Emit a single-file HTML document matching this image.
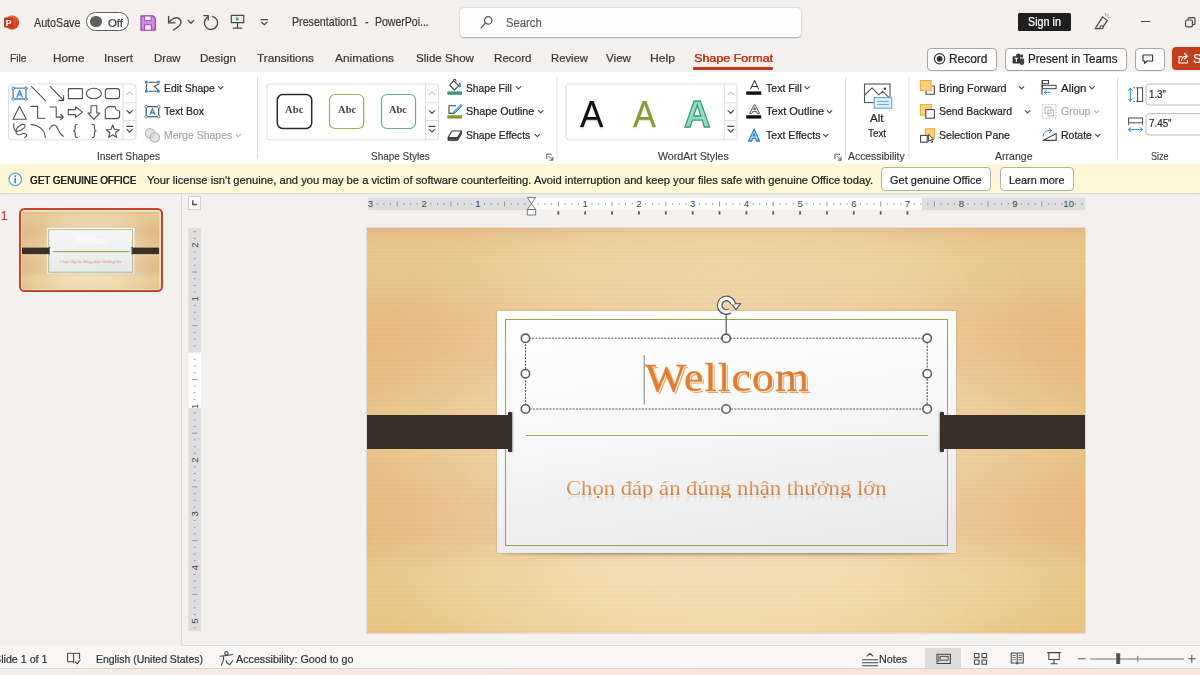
<!DOCTYPE html>
<html><head><meta charset="utf-8"><title>PowerPoint</title>
<style>
html,body{margin:0;padding:0;}
body{width:1200px;height:675px;position:relative;overflow:hidden;background:#f3f0ed;font-family:"Liberation Sans",sans-serif;}
.t{position:absolute;white-space:nowrap;line-height:1;transform-origin:0 50%;}
.l{-webkit-text-stroke:0.22px currentColor;}
.a{position:absolute;}
svg{position:absolute;overflow:visible;}
.thumb .gb{border-width:4.5px !important;border-color:#a4b063 !important;}
.thumb .gl{height:6px !important;top:204.5px !important;background:#9aa84f !important;}
.thumb .ttl{color:#fffaf4 !important;-webkit-text-stroke:2px #fffaf4 !important;text-shadow:0 0 6px #f3e3d3 !important;}
.thumb .sub{background:none !important;-webkit-text-fill-color:#e6b896 !important;color:#e6b896 !important;-webkit-text-stroke:1px #e6b896 !important;}
.thumb .sub2,.thumb .grain{display:none;}
.thumb .sl{filter:saturate(0.88);}
.thumb .card{background:linear-gradient(175deg,#f6f6f7 0%,#f0f1f2 45%,#e4e5e7 100%) !important;}
</style></head><body>
<!-- ribbon -->
<div class="a" style="left:0;top:72px;width:1200px;height:92px;background:#fff;"></div>
<!-- yellow bar -->
<div class="a" style="left:0;top:164px;width:1200px;height:29.2px;background:#fef7d7;box-shadow:0 0.8px 1.6px rgba(60,50,30,0.28);"></div>
<!-- status bar -->
<div class="a" style="left:0;top:646px;width:1200px;height:22px;background:#f8f7f6;"></div>
<div class="a" style="left:0;top:668px;width:1200px;height:7px;background:linear-gradient(to right,#f4ede8 0%,#f7e8e0 25%,#f8e4db 60%,#f8e5dc 100%);border-top:1px solid #d9d5d0;box-sizing:border-box;"></div>
<!-- ===== title bar ===== -->
<svg style="left:3px;top:14px" width="17" height="17" viewBox="0 0 17 17">
  <defs><linearGradient id="pg" x1="0" y1="0" x2="1" y2="1"><stop offset="0" stop-color="#f08a5e"/><stop offset="0.55" stop-color="#dc4f2c"/><stop offset="1" stop-color="#b8361a"/></linearGradient></defs>
  <circle cx="9" cy="8.5" r="7.2" fill="url(#pg)"/>
  <rect x="1" y="3.6" width="9.4" height="10" rx="1.2" fill="#c23a1c"/>
  <text x="5.7" y="12" font-family="'Liberation Sans',sans-serif" font-weight="bold" font-size="8.6" fill="#fff" text-anchor="middle">P</text>
</svg>
<!-- autosave toggle -->
<div class="a" style="left:86px;top:12.3px;width:40.5px;height:17px;border:1.3px solid #5f5f5f;border-radius:10px;background:#fdfdfd;box-sizing:content-box;"></div>
<div class="a" style="left:90px;top:15.6px;width:11.6px;height:11.6px;border-radius:50%;background:#5f5f5f;"></div>
<!-- save -->
<svg style="left:139.5px;top:14.5px" width="16" height="16" viewBox="0 0 16 16">
  <path d="M1 1 H13.2 L15.3 3 V15.2 H1 Z" fill="#cf8be0" stroke="#a845bd" stroke-width="1.3" stroke-linejoin="round"/>
  <rect x="4.6" y="1" width="6.6" height="4.6" fill="#fbf3fd" stroke="#a845bd" stroke-width="1"/>
  <rect x="4.6" y="9.8" width="6.8" height="5.4" fill="#fbf3fd" stroke="#a845bd" stroke-width="1"/>
</svg>
<!-- undo -->
<svg style="left:167px;top:14.5px" width="16" height="16" viewBox="0 0 16 16" fill="none" stroke="#4a4a4a" stroke-width="1.35" stroke-linecap="round" stroke-linejoin="round">
  <path d="M1.6 1.4 V7.8 H8"/>
  <path d="M1.8 7.6 C4.5 3.4 9.2 1.6 12.2 3.6 C15 5.6 14.4 9 12.2 11 L6.6 15"/>
</svg>
<svg style="left:186.5px;top:19px" width="8" height="6" viewBox="0 0 8 6" fill="none" stroke="#4a4a4a" stroke-width="1.3" stroke-linecap="round" stroke-linejoin="round"><path d="M1.2 1.4 L4 4.2 L6.8 1.4"/></svg>
<!-- redo -->
<svg style="left:202px;top:14px" width="17" height="17" viewBox="0 0 17 17" fill="none" stroke="#4a4a4a" stroke-width="1.35" stroke-linecap="round" stroke-linejoin="round">
  <path d="M5.6 3.2 A6.6 6.6 0 1 0 10.4 2.4"/>
  <path d="M1.8 1.6 H6.2 V6"/>
</svg>
<!-- present from beginning -->
<svg style="left:230px;top:14px" width="15" height="16" viewBox="0 0 15 16" fill="none" stroke="#4a4a4a" stroke-width="1.2" stroke-linecap="round" stroke-linejoin="round">
  <rect x="1.3" y="1.3" width="12.4" height="7.4" fill="#e1f1e6"/>
  <path d="M6.2 3 L9.2 5 L6.2 7 Z" fill="#3f8f5c" stroke="none"/>
  <path d="M7.5 8.8 V14 M3.2 14.2 H11.8"/>
</svg>
<!-- customize QAT -->
<svg style="left:260px;top:18px" width="9" height="9" viewBox="0 0 9 9" fill="none" stroke="#4a4a4a" stroke-width="1.2" stroke-linecap="round" stroke-linejoin="round"><path d="M1 1.6 H7.6 M1.6 4.2 L4.3 6.8 L7 4.2"/></svg>
<!-- search -->
<div class="a" style="left:459.5px;top:8px;width:341.5px;height:28.5px;border-radius:4px;background:#fdfdfd;box-shadow:0 0.5px 1.5px rgba(0,0,0,0.28),0 0 0 0.5px rgba(0,0,0,0.06);"></div>
<svg style="left:479px;top:14px" width="16" height="16" viewBox="0 0 16 16" fill="none" stroke="#555" stroke-width="1.2" stroke-linecap="round"><circle cx="9.2" cy="6.4" r="3.7"/><path d="M6.5 9.2 L2 13.8"/></svg>
<!-- sign in -->
<div class="a" style="left:1017.5px;top:13px;width:53.5px;height:17.5px;background:#1f1f1f;border-radius:1.5px;"></div>
<!-- megaphone / coming soon -->
<svg style="left:1090px;top:10px" width="22" height="22" viewBox="1090 10 22 22" fill="none" stroke="#444" stroke-width="1.15" stroke-linecap="round" stroke-linejoin="round">
  <path d="M1095.2 28.6 L1102.6 16.9 L1107.4 20.6 L1102.6 27.4 M1095.2 28.6 H1100"/>
  <circle cx="1101.5" cy="27.2" r="1.5" fill="#f3f0ed"/>
  <path d="M1105.4 13.2 L1105.9 15.4 M1108.2 14.4 L1107.4 16.3 M1109.6 17.2 L1108.2 17.8" stroke="#6ab0e0" stroke-width="1"/>
</svg>
<div class="a" style="left:1140.5px;top:21px;width:9.5px;height:1.2px;background:#444;"></div>
<svg style="left:1184px;top:16px" width="13" height="13" viewBox="1184 16 13 13" fill="none" stroke="#444" stroke-width="1.15"><rect x="1185.6" y="20" width="6.8" height="6.8" rx="1.4"/><path d="M1188 19.6 V19.2 A1.6 1.6 0 0 1 1189.6 17.6 H1193.4 A1.6 1.6 0 0 1 1195 19.2 V23 A1.6 1.6 0 0 1 1193.4 24.6 H1192.8"/></svg>
<!-- ===== tab row ===== -->
<div class="a" style="left:693px;top:67.4px;width:80px;height:2.3px;background:#c13b1b;border-radius:1px;"></div>
<!-- record button -->
<div class="a" style="left:926.8px;top:47.5px;width:68.5px;height:21px;border:1px solid #a8a6a4;border-radius:4px;background:#fdfdfd;"></div>
<svg style="left:933px;top:52px" width="14" height="14" viewBox="0 0 14 14"><circle cx="6.6" cy="6.8" r="5.2" fill="none" stroke="#333" stroke-width="1.1"/><circle cx="6.6" cy="6.8" r="2.9" fill="#333"/></svg>
<!-- present in teams -->
<div class="a" style="left:1004.6px;top:47.5px;width:120.5px;height:21px;border:1px solid #a8a6a4;border-radius:4px;background:#fdfdfd;"></div>
<svg style="left:1011.5px;top:52.5px" width="13" height="13" viewBox="0 0 13 13">
  <circle cx="9.6" cy="3" r="1.7" fill="#444"/><path d="M7.2 5.4 H12.2 V9.2 A2.4 2.4 0 0 1 7.2 9.6 Z" fill="#444"/>
  <circle cx="6.2" cy="2.6" r="2" fill="#333"/>
  <rect x="0.6" y="3.2" width="7.4" height="7.4" rx="0.8" fill="#333"/>
  <path d="M2.4 5.2 H6.2 M4.3 5.2 V9" stroke="#fff" stroke-width="1.1" fill="none"/>
</svg>
<!-- comments -->
<div class="a" style="left:1134.6px;top:47.5px;width:28px;height:21px;border:1px solid #a8a6a4;border-radius:4px;background:#fdfdfd;"></div>
<svg style="left:1141.5px;top:53.5px" width="12" height="11" viewBox="0 0 12 11" fill="none" stroke="#333" stroke-width="1.1" stroke-linejoin="round"><path d="M1 1 H10.6 V7 H5 L2.6 9.4 V7 H1 Z"/></svg>
<!-- share -->
<div class="a" style="left:1171.6px;top:47px;width:40px;height:23px;border-radius:4px;background:#c43e1c;"></div>
<svg style="left:1178px;top:52px" width="11" height="12" viewBox="0 0 11 12" fill="none" stroke="#fff" stroke-width="1.1" stroke-linecap="round" stroke-linejoin="round"><path d="M4 4.6 H1 V11 H9.4 V8.4"/><path d="M3.6 8.4 C4 5.6 5.8 4.2 8.2 4.2 M6.4 1.4 L9.4 4.2 L6.4 7"/></svg>
<!-- ===== ribbon ===== -->
<svg style="left:0;top:72px" width="1200" height="92" viewBox="0 72 1200 92" fill="none">
 <!-- group separators -->
 <g stroke="#dcdcdc" stroke-width="1">
  <path d="M257.5 77 V159 M557 77 V159 M845.5 77 V159 M909 77 V159 M1117.5 77 V159"/>
 </g>
 <!-- gallery boxes -->
 <g stroke="#dedede" stroke-width="1" fill="#fff">
  <rect x="8.5" y="84" width="127.5" height="55.8" rx="3"/>
  <rect x="267" y="84" width="171.5" height="55.8" rx="3"/>
  <rect x="566" y="84" width="171" height="55.8" rx="3"/>
 </g>
 <g stroke="#dedede" stroke-width="1">
  <path d="M123 84 V139.8 M123 102.8 H136 M123 120.5 H136"/>
  <path d="M425.5 84 V139.8 M425.5 102.8 H438.5 M425.5 120.5 H438.5"/>
  <path d="M724.3 84 V139.8 M724.3 102.8 H737 M724.3 120.5 H737"/>
 </g>
 <!-- scroll chevrons -->
 <g stroke-width="1.15" stroke-linecap="round" stroke-linejoin="round">
  <g>
   <path d="M127 94.5 L129.7 91.8 L132.4 94.5" stroke="#c8c8c8"/>
   <path d="M127 110.6 L129.7 113.3 L132.4 110.6" stroke="#444"/>
   <path d="M126.8 126.4 H132.6 M127 129.4 L129.7 132.1 L132.4 129.4" stroke="#444"/>
  </g>
  <g transform="translate(302.3 0)">
   <path d="M127 94.5 L129.7 91.8 L132.4 94.5" stroke="#c8c8c8"/>
   <path d="M127 110.6 L129.7 113.3 L132.4 110.6" stroke="#444"/>
   <path d="M126.8 126.4 H132.6 M127 129.4 L129.7 132.1 L132.4 129.4" stroke="#444"/>
  </g>
  <g transform="translate(601 0)">
   <path d="M127 94.5 L129.7 91.8 L132.4 94.5" stroke="#c8c8c8"/>
   <path d="M127 110.6 L129.7 113.3 L132.4 110.6" stroke="#444"/>
   <path d="M126.8 126.4 H132.6 M127 129.4 L129.7 132.1 L132.4 129.4" stroke="#444"/>
  </g>
 </g>
 <!-- shapes gallery icons -->
 <g stroke="#505050" stroke-width="1.1" stroke-linecap="round" stroke-linejoin="round">
  <!-- text box (blue selected) -->
  <rect x="13.2" y="88.2" width="12.8" height="10.8" stroke="#3f8bc9" stroke-width="1.3"/>
  <g fill="#fff" stroke="#3f8bc9" stroke-width="1"><circle cx="13.2" cy="88.2" r="1.3"/><circle cx="26" cy="88.2" r="1.3"/><circle cx="13.2" cy="99" r="1.3"/><circle cx="26" cy="99" r="1.3"/></g>
  <path d="M17 97 L19.6 90.6 L22.2 97 M17.9 94.9 H21.3" stroke="#3f8bc9" stroke-width="1.4"/>
  <!-- line, arrow -->
  <path d="M31.4 86.4 L45.4 100.6"/>
  <path d="M50 86.4 L63.4 100.2 M63.6 95.6 V100.4 H58.8"/>
  <rect x="68.4" y="88.6" width="14" height="10"/>
  <ellipse cx="93.8" cy="93.5" rx="7.5" ry="5.2"/>
  <rect x="105.3" y="88.6" width="14.2" height="10" rx="2.4"/>
  <!-- row 2 -->
  <path d="M19.6 106.2 L26.2 119.2 H13 Z"/>
  <path d="M31.2 106.4 H37.6 V118.2 H45"/>
  <path d="M50 107 H56.2 V117.1 H63.2 M60.6 114.5 L63.4 117.1 L60.6 119.7"/>
  <path d="M68.2 109.6 H75.6 V106.8 L82.4 112.1 L75.6 117.4 V114.6 H68.2 Z"/>
  <path d="M91 105.8 H96.8 V113 H99.8 L93.9 119.3 L88 113 H91 Z"/>
  <path d="M108 106.6 H115.2 A4.4 4.4 0 0 0 119.6 111 V116 A2.6 2.6 0 0 1 117 118.6 H105.3 V109.3 Z"/>
  <!-- row 3 -->
  <path d="M13.8 123.8 C13.4 127 14.4 130 16 131.6 C19 131.4 24 129.4 25 126.4 C25.4 124 22.4 124 20.4 125.2 C17.6 127 15.6 129.6 16 131.8 C16.2 134.2 18 135.4 20.4 134.4 C22.6 133.4 25 132.8 26.4 134.6 C27 136 25.8 137 24.6 137.2"/>
  <path d="M31 124.6 C39.6 125 45 130.4 45.3 137.7"/>
  <path d="M49.3 129.3 C51.6 125.6 54.4 123.4 56.6 126.6 C59 130.6 60 135 63.5 136.2"/>
  <path d="M77.2 124.2 C75.2 124.2 75.2 125.2 75.2 126.6 V128.6 C75.2 130 74.8 130.6 73.6 130.8 C74.8 131 75.2 131.6 75.2 133 V135.2 C75.2 136.8 75.2 137.6 77.2 137.6"/>
  <path d="M92.4 124.2 C94.4 124.2 94.4 125.2 94.4 126.6 V128.6 C94.4 130 94.8 130.6 96 130.8 C94.800 131 94.4 131.600 94.4 133 V135.2 C94.4 136.8 94.4 137.6 92.4 137.6"/>
  <path d="M112.700 125 L114.400 129.500 L119.200 129.700 L115.400 132.700 L116.700 137.400 L112.700 134.700 L108.700 137.400 L110 132.700 L106.200 129.700 L111 129.500 Z"/>
 </g>
 <!-- Edit shape icon -->
 <g>
  <path d="M148.8 82.2 H156.4 M146.8 84.2 C145.9 86.2 145.9 88 146.8 89.6 M148.8 91.3 H156.4 M158.4 84.2 L154.4 86.3 L157.8 89.6" stroke="#505050" stroke-width="1.1" stroke-linecap="round" stroke-linejoin="round"/>
  <g fill="#2f8ad6"><rect x="145" y="80.800" width="2.700" height="2.700"/><rect x="157" y="80.800" width="2.700" height="2.700"/><rect x="145" y="89.900" width="2.700" height="2.700"/><rect x="157" y="89.900" width="2.700" height="2.700"/></g>
 </g>
 <!-- Text Box icon -->
 <g>
  <rect x="146.200" y="106.700" width="12.500" height="10" stroke="#444" stroke-width="1.150"/>
  <g fill="#fff" stroke="#3f8bc9" stroke-width="1"><circle cx="146.200" cy="106.700" r="1.300"/><circle cx="158.700" cy="106.700" r="1.300"/><circle cx="146.200" cy="116.700" r="1.300"/><circle cx="158.700" cy="116.700" r="1.300"/></g>
  <path d="M149.900 114.800 L152.450 108.700 L155 114.800 M150.800 112.800 H154.100" stroke="#3f8bc9" stroke-width="1.400" stroke-linejoin="round"/>
 </g>
 <!-- Merge shapes icon -->
 <g stroke="#b4b4b4" stroke-width="1.100" fill="#d9d9d9" fill-opacity="0.700">
  <circle cx="150" cy="133.200" r="4.700"/><circle cx="154.800" cy="137.400" r="4.700"/>
 </g>
 <!-- chevrons after labels -->
 <g stroke="#444" stroke-width="1.100" stroke-linecap="round" stroke-linejoin="round" fill="none">
  <path d="M218.400 86.600 l2.300 2.300 l2.300 -2.300"/>
  <path d="M236 134.400 l2.300 2.300 l2.300 -2.300" stroke="#b0b0b0"/>
  <path d="M516.200 86.600 l2.300 2.300 l2.300 -2.300"/>
  <path d="M538.500 110.600 l2.300 2.300 l2.300 -2.300"/>
  <path d="M535 134.400 l2.300 2.300 l2.300 -2.300"/>
  <path d="M804.800 86.600 l2.300 2.300 l2.300 -2.300"/>
  <path d="M827.200 110.600 l2.300 2.300 l2.300 -2.300"/>
  <path d="M823.500 134.400 l2.300 2.300 l2.300 -2.300"/>
  <path d="M1019.300 86.600 l2.300 2.300 l2.300 -2.300"/>
  <path d="M1025.300 110.600 l2.300 2.300 l2.300 -2.300"/>
  <path d="M1089.600 86.600 l2.300 2.300 l2.300 -2.300"/>
  <path d="M1094.500 110.600 l2.300 2.300 l2.300 -2.300" stroke="#b0b0b0"/>
  <path d="M1095.500 134.400 l2.300 2.300 l2.300 -2.300"/>
 </g>
 <!-- shape styles -->
 <rect x="277.300" y="94.500" width="34.400" height="34" rx="5.500" stroke="#2a2a2a" stroke-width="1.500" fill="#fff"/>
 <rect x="329.500" y="94.500" width="34.200" height="34" rx="5.500" stroke="#a5ab4c" stroke-width="1.200" fill="#fff"/>
 <rect x="381.500" y="94.500" width="34" height="34" rx="5.500" stroke="#62b09b" stroke-width="1.200" fill="#fff"/>
 <!-- shape fill -->
 <g stroke="#444" stroke-width="1.100" stroke-linejoin="round" stroke-linecap="round">
  <path d="M453.600 80.600 L458.800 85.800 L454.400 90 L449.800 85.400 Z M453.600 80.600 C453.200 78.800 455.800 78.800 456 81"/>
  <path d="M459.800 83.200 C458.600 85 458.600 86.600 459.800 87 C461 86.600 461 85 459.800 83.200 Z" stroke="#2f7fc9" fill="#2f7fc9" stroke-width="0.800"/>
 </g>
 <rect x="447.300" y="91.400" width="14.700" height="3.400" fill="#3b9a78"/>
 <!-- shape outline -->
 <path d="M456 105.800 H449 V113.400 H455" stroke="#444" stroke-width="1.100"/>
 <path d="M460.800 104.600 L453.600 112 L452.600 114 L454.800 113.200 L462 105.800 Z" stroke="#2f86d2" stroke-width="1" fill="#7db9ea" stroke-linejoin="round"/>
 <rect x="447.300" y="115.200" width="14.700" height="3.400" fill="#8b9b25"/>
 <!-- shape effects -->
 <path d="M452 131 H461.600 L457.600 137.600 H448 Z" stroke="#3a3a3a" stroke-width="1.100" fill="#fff" stroke-linejoin="round"/>
 <path d="M448 137.600 H457.600 L461.600 131 V134 L457.600 140.600 H448 Z" fill="#4a4a4a" stroke="#3a3a3a" stroke-width="0.800" stroke-linejoin="round"/>
 <!-- text fill / outline / effects -->
 <path d="M750.400 89.400 L754.600 80.400 L758.800 89.400 M751.800 86.400 H757.400" stroke="#333" stroke-width="1.050" stroke-linejoin="round"/>
 <rect x="746.200" y="91.400" width="15" height="3.400" fill="#111"/>
 <path d="M749.600 113.600 L754.600 104.200 L759.600 113.600 H757.400 L756.400 111.400 H752.800 L751.800 113.600 Z M753.700 109.400 H755.500 L754.600 107.400 Z" stroke="#444" stroke-width="0.900" stroke-linejoin="round" fill="#fff"/>
 <rect x="746.200" y="115.200" width="15" height="3.400" fill="#111"/>
 <path d="M748.600 141 L754.100 129.200 L759.600 141 H756.600 L755.600 138.400 H752.600 L751.600 141 Z M753.400 135.800 H754.800 L754.100 134 Z" stroke="#2b7fd3" stroke-width="1.300" stroke-linejoin="round" fill="#b9dcf7"/>
 <!-- alt text icon -->
 <rect x="864.500" y="84" width="25.500" height="18.600" stroke="#555" stroke-width="1.100" fill="#fff"/>
 <path d="M864.800 95 L872 87.800 L878.800 94.800 L882.600 91.400 L889.600 98.200" stroke="#555" stroke-width="1.100" stroke-linejoin="round"/>
 <circle cx="884.800" cy="88.800" r="1.300" fill="#444"/>
 <rect x="874.200" y="97.600" width="17.600" height="10.600" fill="#e4f1f9" stroke="#62a5cc" stroke-width="1.100"/>
 <path d="M877 101.400 H889 M877 104.400 H889" stroke="#62a5cc" stroke-width="1"/>
 <!-- bring forward -->
 <path d="M931.500 86 H934.300 V94.300 H926 V91" stroke="#444" stroke-width="1.100"/>
 <rect x="920.300" y="80.500" width="10.700" height="10.200" fill="#fad17c" stroke="#eaa53c" stroke-width="1"/>
 <!-- send backward -->
 <rect x="920.300" y="104.600" width="11" height="10.600" fill="#fad17c" stroke="#eaa53c" stroke-width="1"/>
 <rect x="925.800" y="109.600" width="8.600" height="8.600" fill="#fff" stroke="#444" stroke-width="1.100"/>
 <!-- selection pane -->
 <rect x="925.300" y="128.800" width="9.200" height="9.400" fill="#fad17c" stroke="#eaa53c" stroke-width="1"/>
 <rect x="920.600" y="135.400" width="6.600" height="6.800" fill="#fff" stroke="#444" stroke-width="1.100"/>
 <path d="M928.600 134.400 V141.400 L930.300 139.800 L931.600 142.600 L932.800 142 L931.600 139.400 H933.800 Z" fill="#fff" stroke="#333" stroke-width="0.900" stroke-linejoin="round"/>
 <!-- align -->
 <path d="M1042 80 V94.400" stroke="#444" stroke-width="1.100"/>
 <rect x="1042.500" y="80.500" width="6" height="3.200" stroke="#444" stroke-width="1"/>
 <rect x="1042.500" y="85.300" width="13.600" height="3.400" stroke="#444" stroke-width="1"/>
 <path d="M1050 92.300 H1044.400 M1046.400 90.300 L1044.300 92.300 L1046.400 94.300" stroke="#2f86d2" stroke-width="1" stroke-linecap="round" stroke-linejoin="round"/>
 <!-- group (disabled) -->
 <rect x="1042.300" y="104.600" width="13.700" height="13.400" stroke="#b5b5b5" stroke-width="1" stroke-dasharray="1.400 1.600"/>
 <rect x="1045" y="107.200" width="6" height="6" stroke="#b5b5b5" stroke-width="1"/>
 <rect x="1048" y="110.200" width="5.600" height="5.600" stroke="#b5b5b5" stroke-width="1"/>
 <!-- rotate -->
 <path d="M1043 140.400 H1056.200 V133.400 Z" stroke="#444" stroke-width="1.100" stroke-linejoin="round"/>
 <path d="M1043 136.400 C1043 132 1046.400 130 1051.400 130.600 M1049.200 128.400 L1051.800 130.600 L1049.400 132.800" stroke="#2f86d2" stroke-width="1" stroke-linecap="round" stroke-linejoin="round"/>
 <!-- size icons -->
 <path d="M1130.300 88.600 V101 M1128.400 90.600 L1130.300 88.400 L1132.200 90.600 M1128.400 99 L1130.300 101.200 L1132.200 99" stroke="#2f86d2" stroke-width="1" stroke-linecap="round" stroke-linejoin="round"/>
 <rect x="1137.600" y="87.800" width="5" height="13.600" stroke="#444" stroke-width="1"/>
 <path d="M1133.600 87.800 H1136.800 M1133.600 101.400 H1136.800" stroke="#444" stroke-width="1" stroke-dasharray="1.400 1"/>
 <rect x="1128.600" y="118" width="14" height="4.800" stroke="#444" stroke-width="1"/>
 <path d="M1128.600 123.400 V126 M1142.600 123.400 V126" stroke="#444" stroke-width="1" stroke-dasharray="1.400 1"/>
 <path d="M1128.800 129.600 H1142.400 M1130.800 127.700 L1128.600 129.600 L1130.800 131.500 M1140.400 127.700 L1142.600 129.600 L1140.400 131.500" stroke="#2f86d2" stroke-width="1" stroke-linecap="round" stroke-linejoin="round"/>
 <rect x="1146" y="84" width="70" height="21" rx="3" stroke="#b9b9b9" stroke-width="1" fill="#fff"/>
 <rect x="1146" y="113.700" width="70" height="21.300" rx="3" stroke="#b9b9b9" stroke-width="1" fill="#fff"/>
 <!-- dialog launchers -->
 <g stroke="#555" stroke-width="1" stroke-linecap="square">
  <path d="M546.800 158.600 V154.200 H551.200 M549 156.400 L552.600 160 M552.800 157.400 V160.200 H550"/>
  <path d="M835 158.600 V154.200 H839.400 M837.200 156.400 L840.800 160 M841 157.400 V160.200 H838.200"/>
 </g>
</svg>
<!-- WordArt As -->
<span class="t" style="left:580.4px;top:97px;font-size:36.600px;color:#111;font-family:'Liberation Sans',sans-serif;transform:scaleX(0.960);text-shadow:0 1px 1.5px rgba(0,0,0,0.25);">A</span>
<span class="t" style="left:633.4px;top:97px;font-size:36.600px;color:#8a9a38;font-family:'Liberation Sans',sans-serif;transform:scaleX(0.940);text-shadow:0 1px 1.500px rgba(120,130,40,0.350);">A</span>
<span class="t" style="left:683.500px;top:95.600px;font-size:37.500px;color:#93dcc4;font-family:'Liberation Sans',sans-serif;font-weight:bold;transform:scaleX(0.980);-webkit-text-stroke:1.300px #3d9b7a;">A</span>
<!-- ===== work area ===== -->
<!-- info icon in yellow bar -->
<svg style="left:7px;top:171px" width="17" height="17" viewBox="0 0 17 17"><circle cx="8.2" cy="8.4" r="6.2" fill="#fff" stroke="#5aa6d8" stroke-width="1.3"/><circle cx="8.2" cy="5.3" r="0.95" fill="#2f7fc6"/><path d="M8.2 7.4 V11.8" stroke="#2f7fc6" stroke-width="1.5" stroke-linecap="round"/></svg>
<div class="a" style="left:881px;top:167px;width:108px;height:22.3px;border:1px solid #b3b0a8;border-radius:4px;background:#fff;"></div>
<div class="a" style="left:999.8px;top:167px;width:71.8px;height:22.3px;border:1px solid #b3b0a8;border-radius:4px;background:#fff;"></div>
<!-- panel splitter -->
<div class="a" style="left:181px;top:194px;width:1px;height:452px;background:#dddad6;"></div>
<div class="a" style="left:182px;top:645px;width:1018px;height:1px;background:#dddad6;"></div>
<!-- thumbnail -->
<div class="a" style="left:19px;top:208px;width:144px;height:84px;box-sizing:border-box;border:2.6px solid #c5472b;border-radius:5.5px;background:#f3dfc0;"></div>
<div class="a" style="left:22.2px;top:211.8px;width:137.4px;height:77px;overflow:hidden;border-radius:2px;">
 <div class="thumb" style="position:absolute;left:0;top:0;width:719px;height:404.5px;transform-origin:0 0;transform:scale(0.1911,0.1904);">
<div class="sl" style="position:absolute;left:0;top:0;width:718.4px;height:404.5px;overflow:hidden;
 background:
 radial-gradient(ellipse 52% 85% at 50% 62%, rgba(255,250,238,0.47) 0%, rgba(255,249,236,0.31) 50%, rgba(255,248,232,0) 100%),
 linear-gradient(to right, rgba(205,135,60,0.075) 0%, rgba(205,135,60,0.05) 12%, rgba(205,135,60,0) 30%, rgba(205,135,60,0) 70%, rgba(205,135,60,0.05) 88%, rgba(205,135,60,0.075) 100%),
 linear-gradient(to bottom, #e4b687 0%, #e7c08b 1%, #e9c78d 2.5%, #e9cc91 8%, #e8c88d 14%, #e8c389 18%, #e8bd83 22%, #e8bc81 30%, #e8c086 37%, #e9c68b 44%, #e9c58a 55%, #e8bf85 62%, #e7bb80 67%, #e7bb80 76%, #e9c58a 80.5%, #ebce90 85%, #ebcd8d 93%, #e9c987 100%);">
 <div class="grain" style="position:absolute;left:0;top:0;width:719px;height:404.5px;background:repeating-linear-gradient(to bottom, rgba(190,130,60,0.04) 0px, rgba(190,130,60,0.04) 1px, rgba(255,255,255,0.035) 1px, rgba(255,255,255,0.035) 2.5px);"></div>
 <!-- card shadow -->
 <div style="position:absolute;left:135px;top:320px;width:449px;height:6px;border-radius:40%/100%;background:rgba(80,65,50,0.55);filter:blur(2px);"></div>
 <!-- card -->
 <div class="card" style="position:absolute;left:130px;top:83px;width:459.3px;height:241.5px;background:linear-gradient(172deg,#fefefe 0%,#fafafa 35%,#efefef 70%,#e7e7e7 100%);box-shadow:0 0 2px rgba(120,90,50,0.35);"></div>
 <div class="gb" style="position:absolute;left:138px;top:91.4px;width:443.4px;height:226.2px;border:1px solid #94a34c;box-sizing:border-box;"></div>
 <!-- divider -->
 <div class="gl" style="position:absolute;left:159.5px;top:207px;width:401.5px;height:1.2px;background:#a3b05c;"></div>
 <!-- bands -->
 <div style="position:absolute;left:0;top:186.7px;width:142px;height:34.6px;background:#3b3027;"></div>
 <div style="position:absolute;left:141.5px;top:184.2px;width:3.8px;height:39.4px;background:#3b3027;border-radius:1px;box-shadow:1px 0 2px rgba(0,0,0,0.35);"></div>
 <div style="position:absolute;left:577px;top:186.7px;width:142px;height:34.6px;background:#3b3027;"></div>
 <div style="position:absolute;left:573.6px;top:184.2px;width:3.8px;height:39.4px;background:#3b3027;border-radius:1px;box-shadow:-1px 0 2px rgba(0,0,0,0.35);"></div>
 <!-- title -->
 <div class="ttl" style="position:absolute;left:278.3px;top:130.4px;white-space:nowrap;line-height:1;font-family:'Liberation Serif',serif;font-size:40px;letter-spacing:1.2px;color:#e07d2f;-webkit-text-stroke:0.4px #e07d2f;text-shadow:1px 1px 0 #fff7ee, 1.9px 1.9px 0.5px #e8a36c;transform-origin:0 50%;transform:scaleX(1.089);">Wellcom</div>
 <!-- subtitle -->
 <div class="sub" style="position:absolute;left:199.2px;top:249.5px;white-space:nowrap;line-height:1;font-family:'Liberation Serif',serif;font-size:20.6px;color:#dd9256;background:linear-gradient(to bottom,#e6a36c 0%,#e09a60 35%,#d3803f 70%,#cf7c3c 100%);-webkit-background-clip:text;background-clip:text;-webkit-text-fill-color:transparent;transform-origin:0 50%;transform:scaleX(1.0996);">Chọn đáp án đúng nhận thưởng lớn</div>
 <div class="sub2" style="position:absolute;left:199.2px;top:264.2px;white-space:nowrap;line-height:1;font-family:'Liberation Serif',serif;font-size:20.6px;color:#dd9256;transform-origin:0 50%;transform:scaleX(1.0996) scaleY(-1);opacity:0.55;-webkit-mask-image:linear-gradient(to top,rgba(0,0,0,0.85) 0%,rgba(0,0,0,0) 50%);mask-image:linear-gradient(to top,rgba(0,0,0,0.85) 0%,rgba(0,0,0,0) 50%);" aria-hidden="true">Chọn đáp án đúng nhận thưởng lớn</div>
</div>

 </div>
</div>
<!-- tab selector -->
<div class="a" style="left:188px;top:196.3px;width:13.4px;height:14px;box-sizing:border-box;border:1px solid #d2d0cd;background:#fbfbfb;"></div>
<svg style="left:191px;top:199px" width="8" height="8" viewBox="0 0 8 8"><path d="M1.8 1.2 V5.6 H6" stroke="#555" stroke-width="1.5" fill="none"/></svg>
<svg style="left:0;top:190px" width="1200" height="460" viewBox="0 190 1200 460">
<rect x="368.4" y="197.6" width="717.1" height="12.6" fill="#dddddf"/>
<rect x="531.5" y="197.6" width="390.5" height="12.6" fill="#fefefe"/>
<path d="M377.1 203.1 V204.7 M383.8 203.1 V204.7 M390.5 203.1 V204.7 M397.2 201.5 V206.3 M403.9 203.1 V204.7 M410.6 203.1 V204.7 M417.3 203.1 V204.7 M430.8 203.1 V204.7 M437.5 203.1 V204.7 M444.2 203.1 V204.7 M450.9 201.5 V206.3 M457.6 203.1 V204.7 M464.4 203.1 V204.7 M471.1 203.1 V204.7 M484.5 203.1 V204.7 M491.2 203.1 V204.7 M497.9 203.1 V204.7 M504.6 201.5 V206.3 M511.4 203.1 V204.7 M518.1 203.1 V204.7 M524.8 203.1 V204.7 M538.2 203.1 V204.7 M544.9 203.1 V204.7 M551.6 203.1 V204.7 M558.4 201.5 V206.3 M565.1 203.1 V204.7 M571.8 203.1 V204.7 M578.5 203.1 V204.7 M591.9 203.1 V204.7 M598.6 203.1 V204.7 M605.4 203.1 V204.7 M612.1 201.5 V206.3 M618.8 203.1 V204.7 M625.5 203.1 V204.7 M632.2 203.1 V204.7 M645.7 203.1 V204.7 M652.4 203.1 V204.7 M659.1 203.1 V204.7 M665.8 201.5 V206.3 M672.5 203.1 V204.7 M679.2 203.1 V204.7 M685.9 203.1 V204.7 M699.4 203.1 V204.7 M706.1 203.1 V204.7 M712.8 203.1 V204.7 M719.5 201.5 V206.3 M726.2 203.1 V204.7 M733.0 203.1 V204.7 M739.7 203.1 V204.7 M753.1 203.1 V204.7 M759.8 203.1 V204.7 M766.5 203.1 V204.7 M773.2 201.5 V206.3 M780.0 203.1 V204.7 M786.7 203.1 V204.7 M793.4 203.1 V204.7 M806.8 203.1 V204.7 M813.5 203.1 V204.7 M820.2 203.1 V204.7 M827.0 201.5 V206.3 M833.7 203.1 V204.7 M840.4 203.1 V204.7 M847.1 203.1 V204.7 M860.5 203.1 V204.7 M867.2 203.1 V204.7 M874.0 203.1 V204.7 M880.7 201.5 V206.3 M887.4 203.1 V204.7 M894.1 203.1 V204.7 M900.8 203.1 V204.7 M914.3 203.1 V204.7 M921.0 203.1 V204.7 M927.7 203.1 V204.7 M934.4 201.5 V206.3 M941.1 203.1 V204.7 M947.8 203.1 V204.7 M954.5 203.1 V204.7 M968.0 203.1 V204.7 M974.7 203.1 V204.7 M981.4 203.1 V204.7 M988.1 201.5 V206.3 M994.8 203.1 V204.7 M1001.5 203.1 V204.7 M1008.3 203.1 V204.7 M1021.7 203.1 V204.7 M1028.4 203.1 V204.7 M1035.1 203.1 V204.7 M1041.8 201.5 V206.3 M1048.6 203.1 V204.7 M1055.3 203.1 V204.7 M1062.0 203.1 V204.7 M1075.4 203.1 V204.7 M1082.1 203.1 V204.7" stroke="#8a8a8a" stroke-width="0.9" fill="none"/>
<text x="370.3" y="207.2" font-family="'Liberation Sans',sans-serif" font-size="9.6" fill="#444" text-anchor="middle">3</text>
<text x="424.1" y="207.2" font-family="'Liberation Sans',sans-serif" font-size="9.6" fill="#444" text-anchor="middle">2</text>
<text x="477.8" y="207.2" font-family="'Liberation Sans',sans-serif" font-size="9.6" fill="#444" text-anchor="middle">1</text>
<text x="585.2" y="207.2" font-family="'Liberation Sans',sans-serif" font-size="9.6" fill="#444" text-anchor="middle">1</text>
<text x="638.9" y="207.2" font-family="'Liberation Sans',sans-serif" font-size="9.6" fill="#444" text-anchor="middle">2</text>
<text x="692.7" y="207.2" font-family="'Liberation Sans',sans-serif" font-size="9.6" fill="#444" text-anchor="middle">3</text>
<text x="746.4" y="207.2" font-family="'Liberation Sans',sans-serif" font-size="9.6" fill="#444" text-anchor="middle">4</text>
<text x="800.1" y="207.2" font-family="'Liberation Sans',sans-serif" font-size="9.6" fill="#444" text-anchor="middle">5</text>
<text x="853.8" y="207.2" font-family="'Liberation Sans',sans-serif" font-size="9.6" fill="#444" text-anchor="middle">6</text>
<text x="907.5" y="207.2" font-family="'Liberation Sans',sans-serif" font-size="9.6" fill="#444" text-anchor="middle">7</text>
<text x="961.3" y="207.2" font-family="'Liberation Sans',sans-serif" font-size="9.6" fill="#444" text-anchor="middle">8</text>
<text x="1015.0" y="207.2" font-family="'Liberation Sans',sans-serif" font-size="9.6" fill="#444" text-anchor="middle">9</text>
<text x="1068.7" y="207.2" font-family="'Liberation Sans',sans-serif" font-size="9.6" fill="#444" text-anchor="middle">10</text>
<rect x="557.5" y="211.3" width="1.8" height="3.2" fill="#555"/><rect x="584.3" y="211.3" width="1.8" height="3.2" fill="#555"/><rect x="611.2" y="211.3" width="1.8" height="3.2" fill="#555"/><rect x="638.0" y="211.3" width="1.8" height="3.2" fill="#555"/><rect x="664.9" y="211.3" width="1.8" height="3.2" fill="#555"/><rect x="691.8" y="211.3" width="1.8" height="3.2" fill="#555"/><rect x="718.6" y="211.3" width="1.8" height="3.2" fill="#555"/><rect x="745.5" y="211.3" width="1.8" height="3.2" fill="#555"/><rect x="772.3" y="211.3" width="1.8" height="3.2" fill="#555"/><rect x="799.2" y="211.3" width="1.8" height="3.2" fill="#555"/><rect x="826.1" y="211.3" width="1.8" height="3.2" fill="#555"/><rect x="852.9" y="211.3" width="1.8" height="3.2" fill="#555"/><rect x="879.8" y="211.3" width="1.8" height="3.2" fill="#555"/><rect x="906.6" y="211.3" width="1.8" height="3.2" fill="#555"/>
<g stroke="#6a6a6a" stroke-width="0.9" fill="#fdfdfd" stroke-linejoin="round"><path d="M527.3 197.4 H535.7 L531.5 203.6 Z"/><path d="M527.3 209.6 L531.5 203.6 L535.7 209.6 Z"/><rect x="527.3" y="209.6" width="8.4" height="5.4"/></g>
<rect x="188.3" y="228.3" width="12.7" height="402.9" fill="#dddddf"/>
<rect x="188.3" y="352.6" width="12.7" height="55.6" fill="#fefefe"/>
<path d="M193.8 231.7 H195.5 M193.8 238.4 H195.5 M193.8 251.9 H195.5 M193.8 258.6 H195.5 M193.8 265.3 H195.5 M192.2 272.0 H197.1 M193.8 278.7 H195.5 M193.8 285.5 H195.5 M193.8 292.2 H195.5 M193.8 305.6 H195.5 M193.8 312.3 H195.5 M193.8 319.0 H195.5 M192.2 325.7 H197.1 M193.8 332.5 H195.5 M193.8 339.2 H195.5 M193.8 345.9 H195.5 M193.8 359.3 H195.5 M193.8 366.0 H195.5 M193.8 372.7 H195.5 M192.2 379.5 H197.1 M193.8 386.2 H195.5 M193.8 392.9 H195.5 M193.8 399.6 H195.5 M193.8 413.0 H195.5 M193.8 419.8 H195.5 M193.8 426.5 H195.5 M192.2 433.2 H197.1 M193.8 439.9 H195.5 M193.8 446.6 H195.5 M193.8 453.3 H195.5 M193.8 466.8 H195.5 M193.8 473.5 H195.5 M193.8 480.2 H195.5 M192.2 486.9 H197.1 M193.8 493.6 H195.5 M193.8 500.3 H195.5 M193.8 507.0 H195.5 M193.8 520.5 H195.5 M193.8 527.2 H195.5 M193.8 533.9 H195.5 M192.2 540.6 H197.1 M193.8 547.3 H195.5 M193.8 554.0 H195.5 M193.8 560.8 H195.5 M193.8 574.2 H195.5 M193.8 580.9 H195.5 M193.8 587.6 H195.5 M192.2 594.3 H197.1 M193.8 601.1 H195.5 M193.8 607.8 H195.5 M193.8 614.5 H195.5 M193.8 627.9 H195.5" stroke="#8a8a8a" stroke-width="0.9" fill="none"/>
<text transform="translate(198.0 245.2) rotate(-90)" font-family="'Liberation Sans',sans-serif" font-size="9.6" fill="#444" text-anchor="middle">2</text>
<text transform="translate(198.0 298.9) rotate(-90)" font-family="'Liberation Sans',sans-serif" font-size="9.6" fill="#444" text-anchor="middle">1</text>
<text transform="translate(198.0 406.3) rotate(-90)" font-family="'Liberation Sans',sans-serif" font-size="9.6" fill="#444" text-anchor="middle">1</text>
<text transform="translate(198.0 460.0) rotate(-90)" font-family="'Liberation Sans',sans-serif" font-size="9.6" fill="#444" text-anchor="middle">2</text>
<text transform="translate(198.0 513.8) rotate(-90)" font-family="'Liberation Sans',sans-serif" font-size="9.6" fill="#444" text-anchor="middle">3</text>
<text transform="translate(198.0 567.5) rotate(-90)" font-family="'Liberation Sans',sans-serif" font-size="9.6" fill="#444" text-anchor="middle">4</text>
<text transform="translate(198.0 621.2) rotate(-90)" font-family="'Liberation Sans',sans-serif" font-size="9.6" fill="#444" text-anchor="middle">5</text>
</svg>
<!-- ===== main slide ===== -->
<div class="a" style="left:366.5px;top:228px;width:718.4px;height:404.5px;box-shadow:0 0 0 0.6px rgba(180,170,160,0.5);">
<div class="sl" style="position:absolute;left:0;top:0;width:718.4px;height:404.5px;overflow:hidden;
 background:
 radial-gradient(ellipse 52% 85% at 50% 62%, rgba(255,250,238,0.47) 0%, rgba(255,249,236,0.31) 50%, rgba(255,248,232,0) 100%),
 linear-gradient(to right, rgba(205,135,60,0.075) 0%, rgba(205,135,60,0.05) 12%, rgba(205,135,60,0) 30%, rgba(205,135,60,0) 70%, rgba(205,135,60,0.05) 88%, rgba(205,135,60,0.075) 100%),
 linear-gradient(to bottom, #e4b687 0%, #e7c08b 1%, #e9c78d 2.5%, #e9cc91 8%, #e8c88d 14%, #e8c389 18%, #e8bd83 22%, #e8bc81 30%, #e8c086 37%, #e9c68b 44%, #e9c58a 55%, #e8bf85 62%, #e7bb80 67%, #e7bb80 76%, #e9c58a 80.5%, #ebce90 85%, #ebcd8d 93%, #e9c987 100%);">
 <div class="grain" style="position:absolute;left:0;top:0;width:719px;height:404.5px;background:repeating-linear-gradient(to bottom, rgba(190,130,60,0.04) 0px, rgba(190,130,60,0.04) 1px, rgba(255,255,255,0.035) 1px, rgba(255,255,255,0.035) 2.5px);"></div>
 <!-- card shadow -->
 <div style="position:absolute;left:135px;top:320px;width:449px;height:6px;border-radius:40%/100%;background:rgba(80,65,50,0.55);filter:blur(2px);"></div>
 <!-- card -->
 <div class="card" style="position:absolute;left:130px;top:83px;width:459.3px;height:241.5px;background:linear-gradient(172deg,#fefefe 0%,#fafafa 35%,#efefef 70%,#e7e7e7 100%);box-shadow:0 0 2px rgba(120,90,50,0.35);"></div>
 <div class="gb" style="position:absolute;left:138px;top:91.4px;width:443.4px;height:226.2px;border:1px solid #94a34c;box-sizing:border-box;"></div>
 <!-- divider -->
 <div class="gl" style="position:absolute;left:159.5px;top:207px;width:401.5px;height:1.2px;background:#a3b05c;"></div>
 <!-- bands -->
 <div style="position:absolute;left:0;top:186.7px;width:142px;height:34.6px;background:#3b3027;"></div>
 <div style="position:absolute;left:141.5px;top:184.2px;width:3.8px;height:39.4px;background:#3b3027;border-radius:1px;box-shadow:1px 0 2px rgba(0,0,0,0.35);"></div>
 <div style="position:absolute;left:577px;top:186.7px;width:142px;height:34.6px;background:#3b3027;"></div>
 <div style="position:absolute;left:573.6px;top:184.2px;width:3.8px;height:39.4px;background:#3b3027;border-radius:1px;box-shadow:-1px 0 2px rgba(0,0,0,0.35);"></div>
 <!-- title -->
 <div class="ttl" style="position:absolute;left:278.3px;top:130.4px;white-space:nowrap;line-height:1;font-family:'Liberation Serif',serif;font-size:40px;letter-spacing:1.2px;color:#e07d2f;-webkit-text-stroke:0.4px #e07d2f;text-shadow:1px 1px 0 #fff7ee, 1.9px 1.9px 0.5px #e8a36c;transform-origin:0 50%;transform:scaleX(1.089);">Wellcom</div>
 <!-- subtitle -->
 <div class="sub" style="position:absolute;left:199.2px;top:249.5px;white-space:nowrap;line-height:1;font-family:'Liberation Serif',serif;font-size:20.6px;color:#dd9256;background:linear-gradient(to bottom,#e6a36c 0%,#e09a60 35%,#d3803f 70%,#cf7c3c 100%);-webkit-background-clip:text;background-clip:text;-webkit-text-fill-color:transparent;transform-origin:0 50%;transform:scaleX(1.0996);">Chọn đáp án đúng nhận thưởng lớn</div>
 <div class="sub2" style="position:absolute;left:199.2px;top:264.2px;white-space:nowrap;line-height:1;font-family:'Liberation Serif',serif;font-size:20.6px;color:#dd9256;transform-origin:0 50%;transform:scaleX(1.0996) scaleY(-1);opacity:0.55;-webkit-mask-image:linear-gradient(to top,rgba(0,0,0,0.85) 0%,rgba(0,0,0,0) 50%);mask-image:linear-gradient(to top,rgba(0,0,0,0.85) 0%,rgba(0,0,0,0) 50%);" aria-hidden="true">Chọn đáp án đúng nhận thưởng lớn</div>
</div>

</div>
<!-- selection overlay -->
<svg style="left:366.5px;top:228px" width="719" height="405" viewBox="366.5 228 719 405">
 <rect x="525" y="338.3" width="401.7" height="70.7" fill="none" stroke="#555" stroke-width="1.1" stroke-dasharray="2 1.3"/>
  <g fill="#fff" stroke="#5c5c5c" stroke-width="1.6">
  <circle cx="525" cy="338.3" r="4.2"/><circle cx="725.6" cy="338.3" r="4.2"/><circle cx="926.7" cy="338.3" r="4.2"/>
  <circle cx="525" cy="373.7" r="4.2"/><circle cx="926.7" cy="373.7" r="4.2"/>
  <circle cx="525" cy="409" r="4.2"/><circle cx="725.6" cy="409" r="4.2"/><circle cx="926.7" cy="409" r="4.2"/>
 </g>
 <!-- rotate handle -->
 <path d="M725.7 333.6 V314" stroke="#5a5a5a" stroke-width="1.2"/>
 <g fill="none" stroke-linecap="butt">
  <path d="M729.4 311.19 A6.8 6.8 0 1 1 732.7 304.12" stroke="#5a5a5a" stroke-width="5.8"/>
  <path d="M731.2 303.9 L740.2 303.5 L735.5 309.6 Z" fill="#fff" stroke="#5a5a5a" stroke-width="1.2" stroke-linejoin="round"/>
  <path d="M729.55 310.9 A6.8 6.8 0 1 1 732.7 304.4" stroke="#fff" stroke-width="3.3"/>
 </g>
 <!-- caret -->
 <path d="M643.7 355 V404.6" stroke="#8a8f96" stroke-width="1.1"/>
</svg>
<!-- ===== status bar ===== -->
<div class="a" style="left:925.2px;top:648.4px;width:36.2px;height:19.6px;background:#dcdbda;"></div>
<svg style="left:0;top:646px" width="1200" height="22" viewBox="0 646 1200 22" fill="none" stroke="#444" stroke-width="1.05" stroke-linejoin="round" stroke-linecap="round">
 <!-- spell-check book -->
 <path d="M67.600 653.200 H72.400 C73.200 653.200 73.600 653.800 73.600 654.400 V662.800 C73.600 662.200 73.200 661.800 72.400 661.800 H67.600 Z M79.600 658.400 V653.200 H74.800 C74 653.200 73.600 653.800 73.600 654.400"/>
 <path d="M75.400 661.800 L77.200 663.800 L80.200 660"/>
 <!-- accessibility -->
 <circle cx="226.400" cy="653.200" r="1.700"/>
 <path d="M220 656.200 C223 655.600 229.800 655.600 232.600 654.600 M223.400 656.200 V660.400 L221.200 665.400 M226.200 660.600 L227 663"/>
 <path d="M227.400 662.800 L229.400 664.800 L232.800 660.600"/>
 <!-- notes -->
 <path d="M862.400 659.800 H877.600 M862.400 662.800 H877.600 M862.400 665.800 H877.600 M867.200 656 L870 653.400 L872.800 656"/>
 <!-- normal view -->
 <rect x="937" y="654.200" width="13.400" height="9.200"/>
 <rect x="940.600" y="656.400" width="7.600" height="3.800" stroke-width="0.900"/>
 <path d="M938.800 656 V661.600" stroke-width="0.900"/>
 <!-- slide sorter -->
 <rect x="974.400" y="653.400" width="4.600" height="4.200"/><rect x="982" y="653.400" width="4.600" height="4.200"/>
 <rect x="974.400" y="660" width="4.600" height="4.200"/><rect x="982" y="660" width="4.600" height="4.200"/>
 <!-- reading view -->
 <path d="M1011.200 653 H1016 C1016.800 653 1017.200 653.500 1017.200 654.200 V664 C1017.200 663.400 1016.800 663 1016 663 H1011.200 Z M1023.200 653 H1018.400 C1017.600 653 1017.200 653.500 1017.200 654.200 V664 C1017.200 663.400 1017.600 663 1018.400 663 H1023.200 Z"/>
 <path d="M1012.800 655.400 H1015.400 M1012.800 657.600 H1015.400 M1012.800 659.800 H1015.400 M1019 655.400 H1021.600 M1019 657.600 H1021.600 M1019 659.800 H1021.600" stroke-width="0.800"/>
 <!-- slideshow -->
 <path d="M1047.600 652.600 H1060.400 M1048.800 652.600 V659.400 H1059.200 V652.600 M1054 659.400 V663.600 M1051 663.800 H1057"/>
 <!-- zoom -->
 <path d="M1078.400 658.800 H1085.200" stroke="#555"/>
 <path d="M1090.600 659 H1183.600" stroke="#666" stroke-width="0.900"/>
 <path d="M1137.800 656.200 V661.800" stroke="#666" stroke-width="0.900"/>
 <rect x="1116.200" y="653.200" width="4" height="10.800" fill="#555" stroke="none"/>
 <path d="M1188.200 658.800 H1195.400 M1191.800 655.200 V662.400" stroke="#555"/>
</svg>

<span class="t l" style="left:33.60px;top:16.57px;font-size:12.2px;color:#3a3a3a;font-family:'Liberation Sans', sans-serif;transform:scaleX(0.8778);">AutoSave</span>
<span class="t l" style="left:107.50px;top:17.08px;font-size:11.6px;color:#3a3a3a;font-family:'Liberation Sans', sans-serif;transform:scaleX(0.9826);">Off</span>
<span class="t l" style="left:291.70px;top:16.49px;font-size:12.3px;color:#3a3a3a;font-family:'Liberation Sans', sans-serif;transform:scaleX(0.8670);">Presentation1</span>
<span class="t l" style="left:364.60px;top:16.49px;font-size:12.3px;color:#3a3a3a;font-family:'Liberation Sans', sans-serif;transform:scaleX(0.8760);">-</span>
<span class="t l" style="left:374.50px;top:16.49px;font-size:12.3px;color:#3a3a3a;font-family:'Liberation Sans', sans-serif;transform:scaleX(0.8555);">PowerPoi...</span>
<span class="t l" style="left:505.50px;top:16.99px;font-size:12.3px;color:#616161;font-family:'Liberation Sans', sans-serif;transform:scaleX(0.9187);">Search</span>
<span class="t l" style="left:1027.50px;top:16.34px;font-size:12px;color:#ffffff;font-family:'Liberation Sans', sans-serif;transform:scaleX(0.8991);">Sign in</span>
<span class="t l" style="left:9.50px;top:53.41px;font-size:11.8px;color:#3a3a3a;font-family:'Liberation Sans', sans-serif;transform:scaleX(0.8677);">File</span>
<span class="t l" style="left:52.50px;top:53.41px;font-size:11.8px;color:#3a3a3a;font-family:'Liberation Sans', sans-serif;transform:scaleX(1.0010);">Home</span>
<span class="t l" style="left:104.00px;top:53.41px;font-size:11.8px;color:#3a3a3a;font-family:'Liberation Sans', sans-serif;transform:scaleX(0.9825);">Insert</span>
<span class="t l" style="left:154.00px;top:53.41px;font-size:11.8px;color:#3a3a3a;font-family:'Liberation Sans', sans-serif;transform:scaleX(0.9625);">Draw</span>
<span class="t l" style="left:200.00px;top:53.41px;font-size:11.8px;color:#3a3a3a;font-family:'Liberation Sans', sans-serif;transform:scaleX(0.9800);">Design</span>
<span class="t l" style="left:256.50px;top:53.41px;font-size:11.8px;color:#3a3a3a;font-family:'Liberation Sans', sans-serif;transform:scaleX(0.9954);">Transitions</span>
<span class="t l" style="left:335.00px;top:53.41px;font-size:11.8px;color:#3a3a3a;font-family:'Liberation Sans', sans-serif;transform:scaleX(1.0110);">Animations</span>
<span class="t l" style="left:416.00px;top:53.41px;font-size:11.8px;color:#3a3a3a;font-family:'Liberation Sans', sans-serif;transform:scaleX(0.9825);">Slide Show</span>
<span class="t l" style="left:493.50px;top:53.41px;font-size:11.8px;color:#3a3a3a;font-family:'Liberation Sans', sans-serif;transform:scaleX(0.9860);">Record</span>
<span class="t l" style="left:550.50px;top:53.41px;font-size:11.8px;color:#3a3a3a;font-family:'Liberation Sans', sans-serif;transform:scaleX(0.9564);">Review</span>
<span class="t l" style="left:606.00px;top:53.41px;font-size:11.8px;color:#3a3a3a;font-family:'Liberation Sans', sans-serif;transform:scaleX(0.9858);">View</span>
<span class="t l" style="left:650.00px;top:53.41px;font-size:11.8px;color:#3a3a3a;font-family:'Liberation Sans', sans-serif;transform:scaleX(1.0303);">Help</span>
<span class="t l" style="left:693.50px;top:53.41px;font-size:11.8px;color:#c13b1b;font-family:'Liberation Sans', sans-serif;transform:scaleX(1.0566);text-shadow:0.3px 0 0 #c13b1b;">Shape Format</span>
<span class="t l" style="left:949.00px;top:52.63px;font-size:12.6px;color:#242424;font-family:'Liberation Sans', sans-serif;transform:scaleX(0.9481);">Record</span>
<span class="t l" style="left:1027.50px;top:52.63px;font-size:12.6px;color:#242424;font-family:'Liberation Sans', sans-serif;transform:scaleX(0.9219);">Present in Teams</span>
<span class="t l" style="left:1193.00px;top:52.63px;font-size:12.6px;color:#fff;font-family:'Liberation Sans', sans-serif;transform:scaleX(1.0116);">Share</span>
<span class="t l" style="left:163.75px;top:82.92px;font-size:11.2px;color:#242424;font-family:'Liberation Sans', sans-serif;transform:scaleX(0.9269);">Edit Shape</span>
<span class="t l" style="left:163.75px;top:106.12px;font-size:11.2px;color:#242424;font-family:'Liberation Sans', sans-serif;transform:scaleX(0.9323);">Text Box</span>
<span class="t l" style="left:163.75px;top:130.12px;font-size:11.2px;color:#a9a9a9;font-family:'Liberation Sans', sans-serif;transform:scaleX(0.9379);">Merge Shapes</span>
<span class="t l" style="left:466.25px;top:82.92px;font-size:11.2px;color:#242424;font-family:'Liberation Sans', sans-serif;transform:scaleX(0.9196);">Shape Fill</span>
<span class="t l" style="left:466.25px;top:106.12px;font-size:11.2px;color:#242424;font-family:'Liberation Sans', sans-serif;transform:scaleX(0.9625);">Shape Outline</span>
<span class="t l" style="left:466.25px;top:130.12px;font-size:11.2px;color:#242424;font-family:'Liberation Sans', sans-serif;transform:scaleX(0.9251);">Shape Effects</span>
<span class="t l" style="left:765.50px;top:82.92px;font-size:11.2px;color:#242424;font-family:'Liberation Sans', sans-serif;transform:scaleX(0.9427);">Text Fill</span>
<span class="t l" style="left:765.50px;top:106.12px;font-size:11.2px;color:#242424;font-family:'Liberation Sans', sans-serif;transform:scaleX(0.9860);">Text Outline</span>
<span class="t l" style="left:765.50px;top:130.12px;font-size:11.2px;color:#242424;font-family:'Liberation Sans', sans-serif;transform:scaleX(0.9458);">Text Effects</span>
<span class="t l" style="left:870.20px;top:112.72px;font-size:11.2px;color:#242424;font-family:'Liberation Sans', sans-serif;transform:scaleX(1.0335);">Alt</span>
<span class="t l" style="left:868.20px;top:127.52px;font-size:11.2px;color:#242424;font-family:'Liberation Sans', sans-serif;transform:scaleX(0.8816);">Text</span>
<span class="t l" style="left:939.00px;top:82.92px;font-size:11.2px;color:#242424;font-family:'Liberation Sans', sans-serif;transform:scaleX(0.9606);">Bring Forward</span>
<span class="t l" style="left:939.00px;top:106.12px;font-size:11.2px;color:#242424;font-family:'Liberation Sans', sans-serif;transform:scaleX(0.9316);">Send Backward</span>
<span class="t l" style="left:939.00px;top:130.12px;font-size:11.2px;color:#242424;font-family:'Liberation Sans', sans-serif;transform:scaleX(0.9433);">Selection Pane</span>
<span class="t l" style="left:1060.50px;top:82.92px;font-size:11.2px;color:#242424;font-family:'Liberation Sans', sans-serif;transform:scaleX(1.0245);">Align</span>
<span class="t l" style="left:1060.50px;top:106.12px;font-size:11.2px;color:#a9a9a9;font-family:'Liberation Sans', sans-serif;transform:scaleX(0.9487);">Group</span>
<span class="t l" style="left:1060.50px;top:130.12px;font-size:11.2px;color:#242424;font-family:'Liberation Sans', sans-serif;transform:scaleX(0.9373);">Rotate</span>
<span class="t l" style="left:1149.00px;top:88.75px;font-size:11.4px;color:#242424;font-family:'Liberation Sans', sans-serif;transform:scaleX(0.8547);">1.3&quot;</span>
<span class="t l" style="left:1149.00px;top:117.65px;font-size:11.4px;color:#242424;font-family:'Liberation Sans', sans-serif;transform:scaleX(0.8620);">7.45&quot;</span>
<span class="t l" style="left:97.00px;top:151.24px;font-size:10.7px;color:#3c3c3c;font-family:'Liberation Sans', sans-serif;transform:scaleX(0.9552);-webkit-text-stroke:0.15px currentColor;">Insert Shapes</span>
<span class="t l" style="left:370.75px;top:151.24px;font-size:10.7px;color:#3c3c3c;font-family:'Liberation Sans', sans-serif;transform:scaleX(0.9328);-webkit-text-stroke:0.15px currentColor;">Shape Styles</span>
<span class="t l" style="left:658.00px;top:151.24px;font-size:10.7px;color:#3c3c3c;font-family:'Liberation Sans', sans-serif;transform:scaleX(0.9954);-webkit-text-stroke:0.15px currentColor;">WordArt Styles</span>
<span class="t l" style="left:848.40px;top:151.24px;font-size:10.7px;color:#3c3c3c;font-family:'Liberation Sans', sans-serif;transform:scaleX(0.9725);-webkit-text-stroke:0.15px currentColor;">Accessibility</span>
<span class="t l" style="left:994.50px;top:151.24px;font-size:10.7px;color:#3c3c3c;font-family:'Liberation Sans', sans-serif;transform:scaleX(0.9860);-webkit-text-stroke:0.15px currentColor;">Arrange</span>
<span class="t l" style="left:1151.40px;top:151.24px;font-size:10.7px;color:#3c3c3c;font-family:'Liberation Sans', sans-serif;transform:scaleX(0.8463);-webkit-text-stroke:0.15px currentColor;">Size</span>
<span class="t l" style="left:285.30px;top:104.77px;font-size:10.3px;color:#444;font-family:'Liberation Serif', serif;transform:scaleX(1.0375);font-weight:bold;-webkit-text-stroke:0;">Abc</span>
<span class="t l" style="left:337.60px;top:104.77px;font-size:10.3px;color:#444;font-family:'Liberation Serif', serif;transform:scaleX(1.0263);font-weight:bold;-webkit-text-stroke:0;">Abc</span>
<span class="t l" style="left:389.40px;top:104.77px;font-size:10.3px;color:#444;font-family:'Liberation Serif', serif;transform:scaleX(1.0093);font-weight:bold;-webkit-text-stroke:0;">Abc</span>
<span class="t l" style="left:30.30px;top:173.98px;font-size:11.6px;color:#222;font-family:'Liberation Sans', sans-serif;transform:scaleX(0.8468);text-shadow:0.35px 0 0 #222;">GET GENUINE OFFICE</span>
<span class="t l" style="left:146.50px;top:173.98px;font-size:11.6px;color:#222;font-family:'Liberation Sans', sans-serif;transform:scaleX(0.9655);">Your license isn&#x27;t genuine, and you may be a victim of software counterfeiting. Avoid interruption and keep your files safe with genuine Office today.</span>
<span class="t l" style="left:890.00px;top:173.98px;font-size:11.6px;color:#222;font-family:'Liberation Sans', sans-serif;transform:scaleX(0.9485);">Get genuine Office</span>
<span class="t l" style="left:1008.50px;top:173.98px;font-size:11.6px;color:#222;font-family:'Liberation Sans', sans-serif;transform:scaleX(0.9360);">Learn more</span>
<span class="t l" style="left:0.80px;top:209.80px;font-size:12.4px;color:#c8452a;font-family:'Liberation Sans', sans-serif;">1</span>
<span class="t l" style="left:-6.00px;top:653.69px;font-size:11px;color:#333;font-family:'Liberation Sans', sans-serif;transform:scaleX(0.9719);">Slide 1 of 1</span>
<span class="t l" style="left:96.00px;top:653.69px;font-size:11px;color:#333;font-family:'Liberation Sans', sans-serif;transform:scaleX(0.9511);">English (United States)</span>
<span class="t l" style="left:236.00px;top:653.69px;font-size:11px;color:#333;font-family:'Liberation Sans', sans-serif;transform:scaleX(0.9755);">Accessibility: Good to go</span>
<span class="t l" style="left:879.00px;top:653.69px;font-size:11px;color:#333;font-family:'Liberation Sans', sans-serif;transform:scaleX(0.9739);">Notes</span>
</body></html>
